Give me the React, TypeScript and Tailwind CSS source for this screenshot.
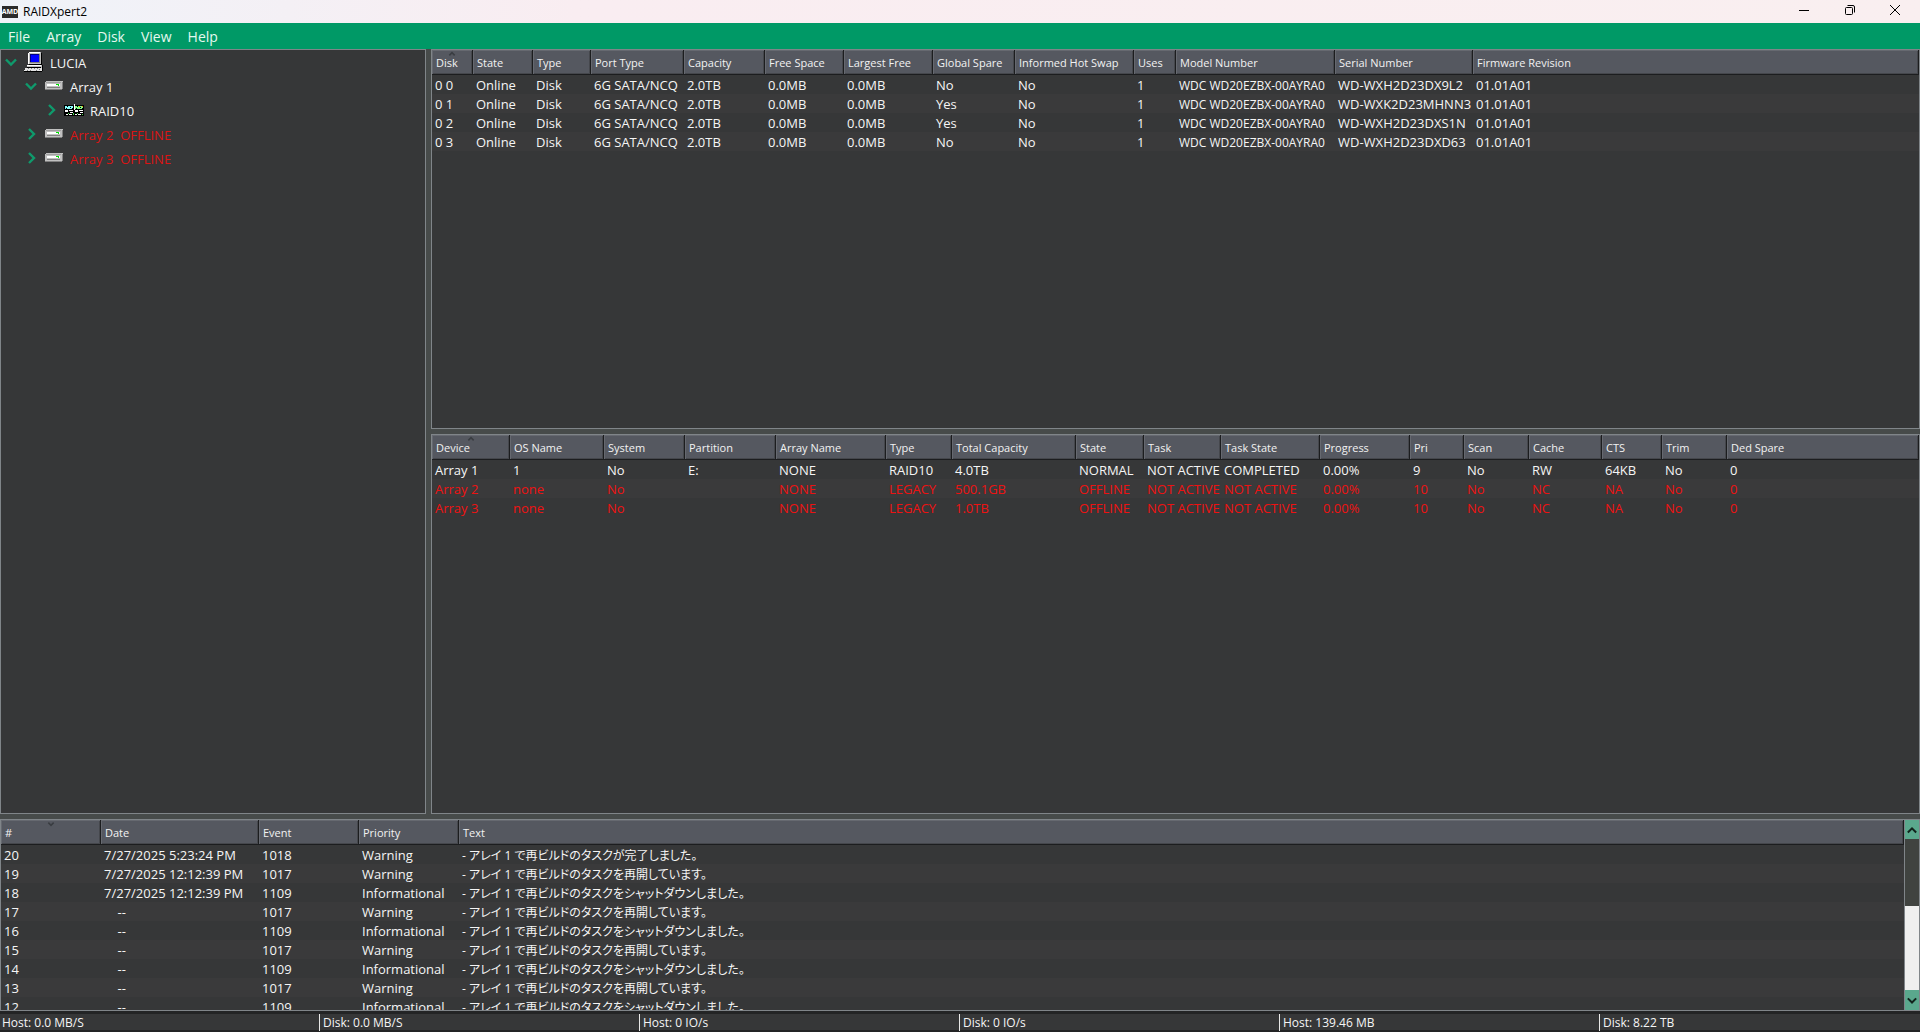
import React, { useState } from 'react';

interface Column {
  label: string;
  width?: number;
  cellClass?: string;
}

interface Row {
  cells: string[];
  offline?: boolean;
}

interface TreeItem {
  label: string;
  indent: string;
  icon: React.ReactNode;
  open?: boolean;
  offline?: boolean;
}

const diskColumns: Column[] = [
  { label: 'Disk', width: 41 },
  { label: 'State', width: 60 },
  { label: 'Type', width: 58 },
  { label: 'Port Type', width: 93 },
  { label: 'Capacity', width: 81 },
  { label: 'Free Space', width: 79 },
  { label: 'Largest Free', width: 89 },
  { label: 'Global Spare', width: 82 },
  { label: 'Informed Hot Swap', width: 119 },
  { label: 'Uses', width: 42 },
  { label: 'Model Number', width: 159, cellClass: 'text-xs' },
  { label: 'Serial Number', width: 138 },
  { label: 'Firmware Revision' },
];

const disks = [
  { id: '0 0', spare: 'No', serial: 'WD-WXH2D23DX9L2' },
  { id: '0 1', spare: 'Yes', serial: 'WD-WXK2D23MHNN3' },
  { id: '0 2', spare: 'Yes', serial: 'WD-WXH2D23DXS1N' },
  { id: '0 3', spare: 'No', serial: 'WD-WXH2D23DXD63' },
];

const diskRows: Row[] = disks.map((d) => ({
  cells: [
    d.id, 'Online', 'Disk', '6G SATA/NCQ', '2.0TB', '0.0MB', '0.0MB', d.spare, 'No', '1',
    'WDC WD20EZBX-00AYRA0', d.serial, '01.01A01',
  ],
}));

const deviceColumns: Column[] = [
  { label: 'Device', width: 78 },
  { label: 'OS Name', width: 94 },
  { label: 'System', width: 81 },
  { label: 'Partition', width: 91 },
  { label: 'Array Name', width: 110 },
  { label: 'Type', width: 66 },
  { label: 'Total Capacity', width: 124 },
  { label: 'State', width: 68 },
  { label: 'Task', width: 77 },
  { label: 'Task State', width: 99 },
  { label: 'Progress', width: 90 },
  { label: 'Pri', width: 54 },
  { label: 'Scan', width: 65 },
  { label: 'Cache', width: 73 },
  { label: 'CTS', width: 60 },
  { label: 'Trim', width: 65 },
  { label: 'Ded Spare' },
];

const deviceRows: Row[] = [
  { cells: ['Array 1', '1', 'No', 'E:', 'NONE', 'RAID10', '4.0TB', 'NORMAL', 'NOT ACTIVE', 'COMPLETED', '0.00%', '9', 'No', 'RW', '64KB', 'No', '0'] },
  { cells: ['Array 2', 'none', 'No', '', 'NONE', 'LEGACY', '500.1GB', 'OFFLINE', 'NOT ACTIVE', 'NOT ACTIVE', '0.00%', '10', 'No', 'NC', 'NA', 'No', '0'], offline: true },
  { cells: ['Array 3', 'none', 'No', '', 'NONE', 'LEGACY', '1.0TB', 'OFFLINE', 'NOT ACTIVE', 'NOT ACTIVE', '0.00%', '10', 'No', 'NC', 'NA', 'No', '0'], offline: true },
];

const eventColumns: Column[] = [
  { label: '#', width: 100 },
  { label: 'Date', width: 158 },
  { label: 'Event', width: 100 },
  { label: 'Priority', width: 100 },
  { label: 'Text', cellClass: "text-xs [font-feature-settings:'palt']" },
];

const NO_DATE = '\u00a0\u00a0\u00a0\u00a0--';
const REBUILD_DONE = '- アレイ 1 で再ビルドのタスクが完了しました。';
const REBUILD_RESUMED = '- アレイ 1 で再ビルドのタスクを再開しています。';
const REBUILD_SHUTDOWN = '- アレイ 1 で再ビルドのタスクをシャットダウンしました。';

const eventRows: Row[] = [
  { cells: ['20', '7/27/2025 5:23:24 PM', '1018', 'Warning', REBUILD_DONE] },
  { cells: ['19', '7/27/2025 12:12:39 PM', '1017', 'Warning', REBUILD_RESUMED] },
  { cells: ['18', '7/27/2025 12:12:39 PM', '1109', 'Informational', REBUILD_SHUTDOWN] },
  { cells: ['17', NO_DATE, '1017', 'Warning', REBUILD_RESUMED] },
  { cells: ['16', NO_DATE, '1109', 'Informational', REBUILD_SHUTDOWN] },
  { cells: ['15', NO_DATE, '1017', 'Warning', REBUILD_RESUMED] },
  { cells: ['14', NO_DATE, '1109', 'Informational', REBUILD_SHUTDOWN] },
  { cells: ['13', NO_DATE, '1017', 'Warning', REBUILD_RESUMED] },
  { cells: ['12', NO_DATE, '1109', 'Informational', REBUILD_SHUTDOWN] },
];

const statusItems = [
  'Host: 0.0 MB/S',
  'Disk: 0.0 MB/S',
  'Host: 0 IO/s',
  'Disk: 0 IO/s',
  'Host: 139.46 MB',
  'Disk: 8.22 TB',
];

const Chevron: React.FC<{ d: string; className: string }> = ({ d, className }) => (
  <svg viewBox="0 0 12 12" className={className} fill="none" stroke="currentColor" strokeWidth="2.4">
    <path d={d} />
  </svg>
);

const DOWN = 'M1 3.5l5 5 5-5';
const RIGHT = 'M4 1l5 5-5 5';

const ComputerIcon = () => (
  <svg width="20" height="20" viewBox="0 0 20 20" shapeRendering="crispEdges">
    <path fill="#c0c0c0" d="M5 0h12v12H5z" />
    <path fill="#fff" d="M4 1h1v11H4zM5 0h11v1H5z" />
    <path fill="#000" d="M17 1h1v12h-1zM5 12h12v1H5z" />
    <path fill="#000080" d="M6 2h9v8H6z" />
    <path fill="#0000ff" d="M7 3h8v7H7z" />
    <path fill="#808080" d="M15 2h1v9H6v-1h9z" />
    <path fill="#c0c0c0" d="M3 13h15v3H3z" />
    <path fill="#fff" d="M3 13h14v1H3z" />
    <path fill="#000" d="M3 15h14v1H3zM18 13h1v6h-1zM0 19h18v1H0z" />
    <path fill="#e4e4e4" d="M1 16h17v3H0v-1h1z" />
    <path fill="#808080" d="M4 16h1v1H4zM7 16h1v1H7zM10 16h1v1h-1zM13 16h1v1h-1zM3 18h1v1H3zM6 18h1v1H6zM12 18h1v1h-1zM15 17h1v1h-1z" />
  </svg>
);

const DriveIcon = () => (
  <svg width="18" height="10" viewBox="0 0 18 10" shapeRendering="crispEdges">
    <path fill="#c0c0c0" d="M1 0h17v8h-1v1H0V1h1z" />
    <path fill="#808080" d="M17 1h1v7h-1zM0 8h17v1H0z" />
    <path fill="#a0a0a0" d="M1 1h15v1H1z" />
    <path fill="#fff" d="M2 3h13v2H2z" />
    <path fill="#808080" d="M2 6h13v1H2z" />
    <path fill="#00e000" d="M11 3h3v1h-3zM13 4h1v1h-1z" />
  </svg>
);

const RaidIcon = () => (
  <svg width="20" height="12" viewBox="0 0 20 12" shapeRendering="crispEdges">
    <path fill="#000" d="M0 1h20v11H0z" />
    <path fill="#8ff" d="M1 2h8v3H1z" />
    <path fill="#8f8" d="M11 2h8v3h-8z" />
    <path fill="#fff" d="M10 0h1v6h-1zM1 6h3v2H1zM5 6h4v1H5zM11 6h3v2h-3zM15 6h4v1h-4z" />
    <path fill="#000" d="M3 2h1v1H3zM6 3h1v1H6zM2 4h1v1H2zM8 4h1v1H8zM13 2h1v1h-1zM16 3h1v1h-1zM12 4h1v1h-1zM18 4h1v1h-1z" />
    <path fill="#fff" d="M6 8h3v1H6zM16 8h3v1h-3zM2 10h2v1H2zM5 10h3v1H5zM11 10h2v1h-2zM14 10h3v1h-3z" />
    <path fill="#4d4" d="M4 9h1v1H4zM9 9h1v2H9zM13 9h1v1h-1zM18 10h1v1h-1z" />
    <path fill="#f90" d="M15 2h1v1h-1zM18 2h1v1h-1z" />
  </svg>
);

const treeItems: TreeItem[] = [
  { label: 'LUCIA', indent: 'pl-1', icon: <ComputerIcon />, open: true },
  { label: 'Array 1', indent: 'pl-6', icon: <DriveIcon />, open: true },
  { label: 'RAID10', indent: 'pl-11', icon: <RaidIcon /> },
  { label: 'Array 2  OFFLINE', indent: 'pl-6', icon: <DriveIcon />, offline: true },
  { label: 'Array 3  OFFLINE', indent: 'pl-6', icon: <DriveIcon />, offline: true },
];

interface DataTableProps {
  name: string;
  columns: Column[];
  rows: Row[];
  sort: 'asc' | 'desc';
}

const DataTable: React.FC<DataTableProps> = ({ name, columns, rows, sort }) => (
  <table aria-label={name} className="w-full table-fixed border-separate border-spacing-0 whitespace-nowrap text-left">
    <colgroup>
      {columns.map((col, i) => (
        <col key={i} style={col.width ? { width: col.width } : undefined} />
      ))}
    </colgroup>
    <thead>
      <tr className="bg-[#555860]">
        {columns.map((col, i) => (
          <th
            key={i}
            className="relative h-[25px] border-r border-b border-[#1c1d1f] py-0 pt-0.5 pl-1 text-[11px] leading-4 font-normal text-[#f2f2f2] shadow-[inset_1px_1px_0_#666970,inset_-1px_-1px_0_#45474c]"
          >
            {col.label}
            {i === 0 && (
              <Chevron
                d={sort === 'asc' ? 'M2 8l4-4 4 4' : 'M2 4l4 4 4-4'}
                className="absolute top-0 left-1/2 size-2 -translate-x-1/2 text-[#3a3d42]"
              />
            )}
          </th>
        ))}
      </tr>
    </thead>
    <tbody>
      {rows.map((row, r) => (
        <tr
          key={r}
          className={`h-[19px] odd:bg-[#363738] even:bg-[#3a3a3b] ${row.offline ? 'text-[#ee1212]' : 'text-[#f5f5f5]'}`}
        >
          {row.cells.map((cell, c) => (
            <td key={c} className={`pt-0.5 pb-0 pl-[3px] leading-[17px] ${columns[c].cellClass ?? 'text-[13px]'}`}>
              {cell}
            </td>
          ))}
        </tr>
      ))}
    </tbody>
  </table>
);

const TitleBar = () => (
  <header className="flex h-[23px] shrink-0 items-center bg-linear-to-r from-[#eff3f9] via-[#f9edf1] via-30% to-[#f9eff0] pr-0.5 text-black">
    <span className="ml-0.5 flex h-3 w-4 items-center justify-center bg-[#2b2b2b] text-[7px] leading-3 font-bold text-white">
      AMD
    </span>
    <h1 className="ml-[5px] text-xs">RAIDXpert2</h1>
    <div className="ml-auto flex h-full pb-1">
      <button aria-label="Minimize" className="flex w-[46px] items-center justify-center">
        <svg width="10" height="10" viewBox="0 0 10 10" stroke="currentColor"><path d="M0 5.5h10" /></svg>
      </button>
      <button aria-label="Restore" className="flex w-[45px] items-center justify-center">
        <svg width="10" height="10" viewBox="0 0 10 10" fill="none" stroke="currentColor">
          <rect x="0.5" y="2.5" width="7" height="7" rx="1" />
          <path d="M2.5 .5H8a1.5 1.5 0 0 1 1.500 1.500v5.500" />
        </svg>
      </button>
      <button aria-label="Close" className="flex w-[46px] items-center justify-center">
        <svg width="10" height="10" viewBox="0 0 10 10" stroke="currentColor"><path d="M0 0l10 10M10 0L0 10" /></svg>
      </button>
    </div>
  </header>
);

const App: React.FC = () => {
  const [selected, setSelected] = useState<number | null>(null);

  return (
    <div className="flex h-screen flex-col overflow-hidden bg-[#474b4a] font-['Open_Sans','Noto_Sans_CJK_JP',sans-serif] text-[13px] text-[#f5f5f5]">
      <TitleBar />

      {/* Menu bar */}
      <nav className="flex h-[26px] shrink-0 items-center gap-4 bg-[#009966] px-2 pt-px text-sm text-[#e4f8ef]">
        {['File', 'Array', 'Disk', 'View', 'Help'].map((item) => (
          <button key={item}>{item}</button>
        ))}
      </nav>

      <main className="flex min-h-0 flex-1 gap-[5px]">
        {/* Array tree */}
        <aside className="w-[426px] shrink-0 border border-[#808589] bg-[#363738]">
          <ul>
            {treeItems.map((item, i) => (
              <li key={i} className={item.indent}>
                <button
                  onClick={() => setSelected(i)}
                  aria-pressed={selected === i}
                  className={`flex h-6 items-center ${item.offline ? 'text-[#dc1414]' : ''}`}
                >
                  <Chevron d={item.open ? DOWN : RIGHT} className="size-3 text-[#0f9a6c]" />
                  <span className="ml-[3px] flex w-7 justify-center">{item.icon}</span>
                  <span className="pt-1 pl-0.5 whitespace-pre">{item.label}</span>
                </button>
              </li>
            ))}
          </ul>
        </aside>

        <div className="flex min-w-0 flex-1 flex-col gap-[5px]">
          <section className="min-h-0 flex-1 overflow-hidden border border-[#808589] bg-[#363738]">
            <DataTable name="Disks" columns={diskColumns} rows={diskRows} sort="asc" />
          </section>
          <section className="min-h-0 flex-1 overflow-hidden border border-[#808589] bg-[#363738]">
            <DataTable name="Devices" columns={deviceColumns} rows={deviceRows} sort="asc" />
          </section>
        </div>
      </main>

      {/* Event log */}
      <section className="mt-[5px] flex h-48 shrink-0 border border-[#808589] bg-[#363738]">
        <div className="min-w-0 flex-1 overflow-hidden">
          <DataTable name="Events" columns={eventColumns} rows={eventRows} sort="desc" />
        </div>
        <div className="flex w-[15px] flex-col border-l border-[#808589] bg-[#404340]">
          <button aria-label="Scroll up" className="flex h-[19px] items-center justify-center bg-[#5aa88d] text-[#12231c]">
            <Chevron d="M1 9l5-5 5 5" className="size-2.5" />
          </button>
          <div className="mt-auto h-[84px] bg-[#efefef]" />
          <button aria-label="Scroll down" className="flex h-5 items-center justify-center bg-[#5aa88d] text-[#12231c]">
            <Chevron d="M1 4l5 5 5-5" className="size-2.5" />
          </button>
        </div>
      </section>

      <footer className="grid h-[21px] shrink-0 grid-cols-6 border-t-3 border-b-2 border-[#232425] bg-[#363738] text-xs">
        {statusItems.map((item, i) => (
          <span key={i} className="border-r border-[#e8e8e8] pt-px pl-[3px] leading-4 first:pl-0.5 last:border-r-0">
            {item}
          </span>
        ))}
      </footer>
    </div>
  );
};

export default App;
